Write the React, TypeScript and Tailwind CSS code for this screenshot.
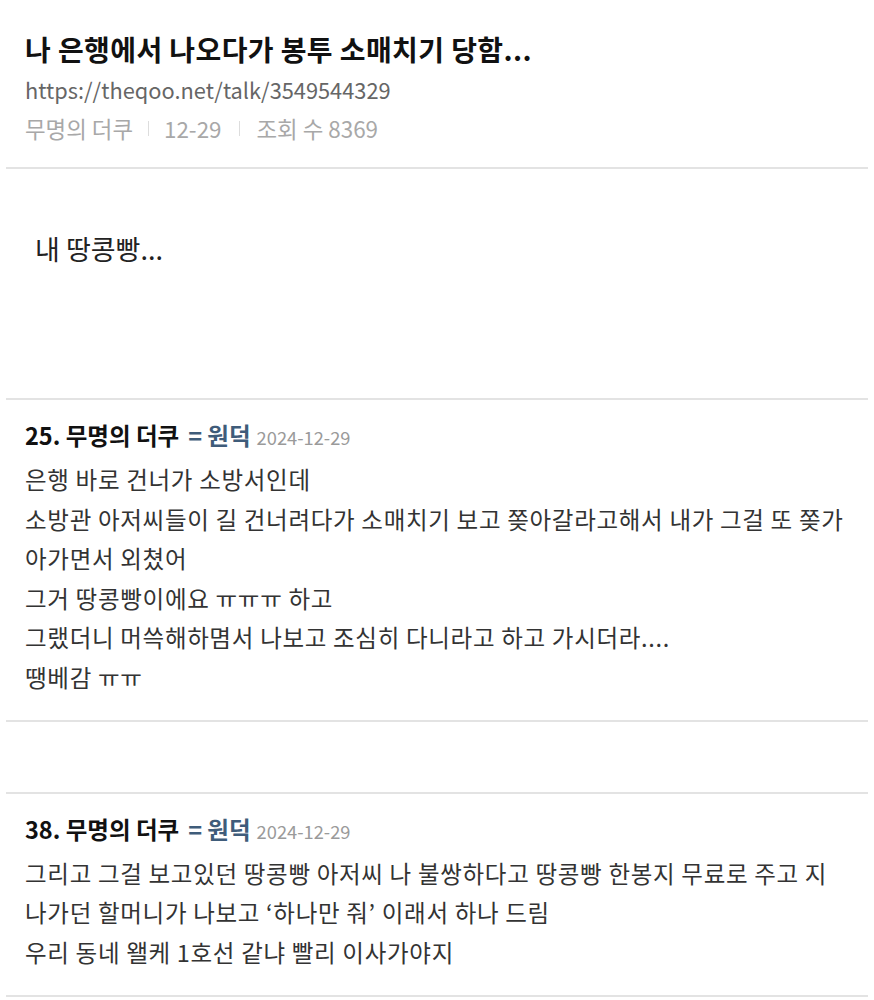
import React from "react";

const font = "font-['Noto_Sans_CJK_KR','Noto_Sans',sans-serif]";

function Comment({ no, lines, pb }: { no: string; lines: string[]; pb: string }) {
  return (
    <div className={`px-[19px] pt-[20px] ${pb}`}>
      <div className="flex items-baseline h-[30px] leading-[30px]">
        <span className="text-[23.5px] font-bold text-[#111]">{no}. 무명의 더쿠</span>
        <span className="text-[23.5px] font-bold text-[#3f5c7a] ml-[9px]">= 원덕</span>
        <span className="text-[18.3px] text-[#9a9a9a] ml-[6px]">2024-12-29</span>
      </div>
      <div className="mt-[10px] text-[23.5px] leading-[39.6px] tracking-[0.7px] text-[#333]">
        {lines.map((l, i) => (
          <div key={i} className="whitespace-nowrap">{l}</div>
        ))}
      </div>
    </div>
  );
}

export default function App() {
  return (
    <div className={`w-[874px] min-h-[1000px] bg-white ${font}`}>
      <div className="px-[6px]">
        <div className="px-[19px] pt-[33px] pb-[20px]">
          <h1 className="text-[28px] leading-[32px] font-bold text-[#111] tracking-[0.4px]">
            나 은행에서 나오다가 봉투 소매치기 당함...
          </h1>
          <div className="mt-[6px] text-[21.8px] leading-[38px] text-[#666]">
            https://theqoo.net/talk/3549544329
          </div>
          <div className="flex items-center text-[22.4px] leading-[38px] text-[#a8a8a8]">
            <span>무명의 더쿠</span>
            <span className="mx-[15px] h-[15px] w-px bg-[#ddd]" />
            <span>12-29</span>
            <span className="mx-[17px] h-[15px] w-px bg-[#ddd]" />
            <span>조회 수 8369</span>
          </div>
        </div>
        <div className="h-[2px] bg-[#e3e3e3]" />
        <div className="px-[29px] pt-[60px] pb-[129px] text-[27px] leading-[40px] text-[#222]">
          내 땅콩빵...
        </div>
        <div className="h-[2px] bg-[#e3e3e3]" />
        <Comment
          no="25"
          pb="pb-[22px]"
          lines={[
            "은행 바로 건너가 소방서인데",
            "소방관 아저씨들이 길 건너려다가 소매치기 보고 쫒아갈라고해서 내가 그걸 또 쫒가",
            "아가면서 외쳤어",
            "그거 땅콩빵이에요 ㅠㅠㅠ 하고",
            "그랬더니 머쓱해하몀서 나보고 조심히 다니라고 하고 가시더라....",
            "땡베감 ㅠㅠ",
          ]}
        />
        <div className="h-[2px] bg-[#e3e3e3]" />
        <div className="h-[70px]" />
        <div className="h-[2px] bg-[#e3e3e3]" />
        <Comment
          no="38"
          pb="pb-[23px]"
          lines={[
            "그리고 그걸 보고있던 땅콩빵 아저씨 나 불쌍하다고 땅콩빵 한봉지 무료로 주고 지",
            "나가던 할머니가 나보고 ‘하나만 줘’ 이래서 하나 드림",
            "우리 동네 왤케 1호선 같냐 빨리 이사가야지",
          ]}
        />
        <div className="h-[2px] bg-[#e3e3e3]" />
      </div>
    </div>
  );
}
